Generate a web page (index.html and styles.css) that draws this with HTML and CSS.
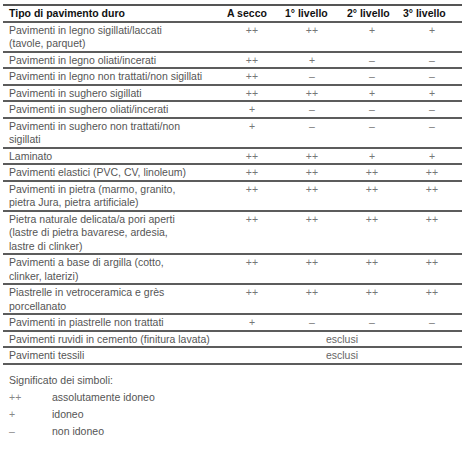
FILE: index.html
```html
<!DOCTYPE html>
<html lang="it">
<head>
    <meta charset="UTF-8">
    <title>Tipo di pavimento duro</title>
    <link rel="stylesheet" href="styles.css">
</head>
<body>
    <table class="floor-table">
        <colgroup>
            <col class="col-type">
            <col class="col-val">
            <col class="col-val">
            <col class="col-val">
            <col class="col-val">
        </colgroup>
        <thead>
            <tr>
                <th>Tipo di pavimento duro</th>
                <th>A secco</th>
                <th>1° livello</th>
                <th>2° livello</th>
                <th>3° livello</th>
            </tr>
        </thead>
        <tbody>
            <tr><td>Pavimenti in legno sigillati/laccati<br>(tavole, parquet)</td><td class="val">++</td><td class="val">++</td><td class="val">+</td><td class="val">+</td></tr>
            <tr><td>Pavimenti in legno oliati/incerati</td><td class="val">++</td><td class="val">+</td><td class="val">–</td><td class="val">–</td></tr>
            <tr><td>Pavimenti in legno non trattati/non sigillati</td><td class="val">++</td><td class="val">–</td><td class="val">–</td><td class="val">–</td></tr>
            <tr><td>Pavimenti in sughero sigillati</td><td class="val">++</td><td class="val">++</td><td class="val">+</td><td class="val">+</td></tr>
            <tr><td>Pavimenti in sughero oliati/incerati</td><td class="val">+</td><td class="val">–</td><td class="val">–</td><td class="val">–</td></tr>
            <tr><td>Pavimenti in sughero non trattati/non<br>sigillati</td><td class="val">+</td><td class="val">–</td><td class="val">–</td><td class="val">–</td></tr>
            <tr><td>Laminato</td><td class="val">++</td><td class="val">++</td><td class="val">+</td><td class="val">+</td></tr>
            <tr><td>Pavimenti elastici (PVC, CV, linoleum)</td><td class="val">++</td><td class="val">++</td><td class="val">++</td><td class="val">++</td></tr>
            <tr><td>Pavimenti in pietra (marmo, granito,<br>pietra Jura, pietra artificiale)</td><td class="val">++</td><td class="val">++</td><td class="val">++</td><td class="val">++</td></tr>
            <tr><td>Pietra naturale delicata/a pori aperti<br>(lastre di pietra bavarese, ardesia,<br>lastre di clinker)</td><td class="val">++</td><td class="val">++</td><td class="val">++</td><td class="val">++</td></tr>
            <tr><td>Pavimenti a base di argilla (cotto,<br>clinker, laterizi)</td><td class="val">++</td><td class="val">++</td><td class="val">++</td><td class="val">++</td></tr>
            <tr><td>Piastrelle in vetroceramica e grès<br>porcellanato</td><td class="val">++</td><td class="val">++</td><td class="val">++</td><td class="val">++</td></tr>
            <tr><td>Pavimenti in piastrelle non trattati</td><td class="val">+</td><td class="val">–</td><td class="val">–</td><td class="val">–</td></tr>
            <tr><td>Pavimenti ruvidi in cemento (finitura lavata)</td><td class="excluded" colspan="4">esclusi</td></tr>
            <tr><td>Pavimenti tessili</td><td class="excluded" colspan="4">esclusi</td></tr>
        </tbody>
    </table>

    <div class="legend">
        <div class="legend-title">Significato dei simboli:</div>
        <div class="legend-row"><span class="sym">++</span><span>assolutamente idoneo</span></div>
        <div class="legend-row"><span class="sym">+</span><span>idoneo</span></div>
        <div class="legend-row"><span class="sym">–</span><span>non idoneo</span></div>
    </div>
</body>
</html>
```

FILE: styles.css
```css
body {
    margin: 0;
    background-color: #fff;
    font-family: 'Liberation Sans', Arial, sans-serif;
    font-size: 10.5px;
    color: #555;
}

.floor-table {
    margin: 4px 0 0 3px;
    width: 459px;
    table-layout: fixed;
    border-collapse: collapse;
    border-top: 2px solid #555;
}

.col-type {
    width: 219px;
}

.col-val {
    width: 60px;
}

.floor-table th,
.floor-table td {
    padding: 1px 6px 0;
    line-height: 13.5px;
    vertical-align: top;
    border-bottom: 2px solid #5c5c5c;
}

.floor-table th {
    padding-left: 5px;
    text-align: left;
    font-weight: bold;
    color: #111;
    white-space: nowrap;
}

.floor-table th:first-child,
.floor-table td:first-child {
    padding-left: 6px;
}

.floor-table th:nth-child(3) {
    padding-left: 3px;
}

.floor-table th:nth-child(5) {
    padding-left: 1px;
}

.floor-table .val {
    text-align: center;
    color: #777;
}

.floor-table .excluded {
    text-align: center;
    color: #666;
}

.legend {
    padding: 7px 0 0 9px;
}

.legend-title {
    line-height: 17px;
}

.legend-row {
    display: flex;
    line-height: 17.3px;
}

.legend-row .sym {
    width: 43px;
    color: #888;
}
```
